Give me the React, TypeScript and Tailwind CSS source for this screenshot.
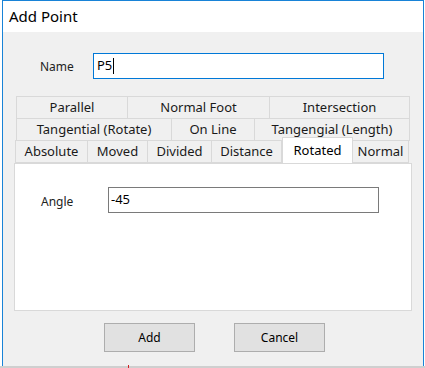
import React from "react";

const font = { fontFamily: '"Segoe UI", "Noto Sans", "Liberation Sans", sans-serif' };

function Tab({ label, w, selected }: { label: string; w: number; selected?: boolean }) {
  return (
    <div
      style={{ width: w }}
      className={
        selected
          ? "relative z-10 -mt-[3px] h-[26px] bg-white border border-[#d9d9d9] border-b-0 flex items-start justify-center pt-[3px] text-[13px] text-black"
          : "h-[23px] bg-[#f0f0f0] border border-[#d9d9d9] -ml-px first:ml-0 flex items-center justify-center pt-px text-[13px] text-[#1a1a1a]"
      }
    >
      {label}
    </div>
  );
}

export default function App() {
  return (
    <div className="relative w-[425px] h-[368px] bg-white overflow-hidden" style={font}>
      <div className="ml-[2px] w-[422px] h-[367px] border border-[#1883d7] bg-[#f0f0f0] flex flex-col">
        <div className="h-[31px] bg-white flex items-center pl-[6px] text-[15px] text-black">Add Point</div>
        <div className="flex items-center pt-[21px]">
          <span className="ml-[37px] w-[53px] pt-[2px] text-[12px] text-[#222]">Name</span>
          <div className="w-[291px] h-[26px] bg-white border border-[#0078d7] flex items-center pl-[3px] text-[13px] text-black">
            P5<span className="inline-block w-px h-[16px] bg-black ml-px"></span>
          </div>
        </div>
        <div className="ml-[11px] mt-[17px] w-[398px] flex flex-col">
          <div className="flex ml-[2px]">
            <Tab label="Parallel" w={112} />
            <Tab label="Normal Foot" w={143} />
            <Tab label="Intersection" w={141} />
          </div>
          <div className="flex ml-[2px] -mt-px">
            <Tab label="Tangential (Rotate)" w={156} />
            <Tab label="On Line" w={84} />
            <Tab label="Tangengial (Length)" w={156} />
          </div>
          <div className="flex ml-[1px] -mt-px items-end h-[23px]">
            <Tab label="Absolute" w={73} />
            <Tab label="Moved" w={61} />
            <Tab label="Divided" w={65} />
            <Tab label="Distance" w={71} />
            <Tab label="Rotated" w={71} selected />
            <Tab label="Normal" w={57} />
          </div>
          <div className="h-[148px] bg-white border border-[#d9d9d9] flex flex-col">
            <div className="flex items-center mt-[23px]">
              <span className="ml-[26px] w-[67px] pt-[4px] text-[12px] text-[#222]">Angle</span>
              <div className="w-[271px] h-[26px] border border-[#7a7a7a] flex items-center pl-[2px] text-[13px] text-black">-45</div>
            </div>
          </div>
        </div>
        <div className="flex mt-[12px] ml-[101px] gap-[39px]">
          <button className="w-[91px] h-[29px] bg-[#e1e1e1] border border-[#adadad] text-[12px] text-black">Add</button>
          <button className="w-[91px] h-[29px] bg-[#e1e1e1] border border-[#adadad] text-[12px] text-black">Cancel</button>
        </div>
      </div>
      <div className="absolute left-0 top-[366px] w-[425px] h-[2px] bg-[#cfcfcf]"></div>
      <div className="absolute left-[128px] top-[365px] w-px h-[3px] bg-[#d02020]"></div>
    </div>
  );
}
